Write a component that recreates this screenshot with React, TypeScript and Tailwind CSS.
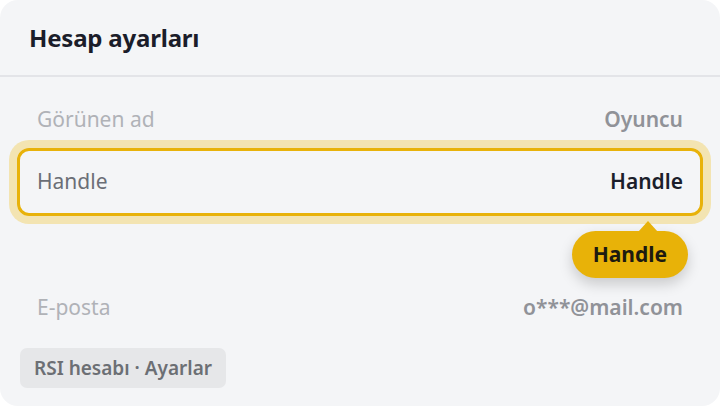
const rows = [
  { label: "Görünen ad", value: "Oyuncu", active: false },
  { label: "Handle", value: "Handle", active: true },
]

export default function App() {
  return (
    <div className="w-[720px] h-[406px] bg-white font-['Noto_Sans','Open_Sans',sans-serif]">
      <div className="h-full rounded-[18px] bg-[#f4f5f7] overflow-hidden flex flex-col">
        <div className="h-[77px] shrink-0 flex items-center px-[29px] border-b-2 border-[#e3e4e8]">
          <h1 className="text-[24px] font-bold text-[#1b1d2a] tracking-[-0.2px]">Hesap ayarları</h1>
        </div>

        <div className="pt-[15px] px-[17px]">
          {rows.map((row) => (
            <div
              key={row.label}
              className={
                row.active
                  ? "relative h-[68px] flex items-center justify-between px-[17px] rounded-[12px] border-[3px] border-[#e8b20a] shadow-[0_0_0_8px_#f3e4b2]"
                  : "h-[56px] flex items-center justify-between px-[20px]"
              }
            >
              <span className={row.active ? "text-[21px] text-[#6b6e76]" : "text-[21px] text-[#b0b2b7]"}>
                {row.label}
              </span>
              <span className={row.active ? "text-[21px] font-semibold text-[#1b1e2b]" : "text-[21px] font-semibold text-[#909298]"}>
                {row.value}
              </span>
              {row.active && (
                <div className="absolute top-full right-[12px] mt-[18px] z-10">
                  <div className="absolute -top-[10px] right-[30px] w-0 h-0 border-l-[10px] border-r-[10px] border-b-[11px] border-l-transparent border-r-transparent border-b-[#e8b208]" />
                  <div className="h-[47px] px-[21px] flex items-center rounded-full bg-[#e8b208] shadow-[0_6px_14px_rgba(0,0,0,0.18)]">
                    <span className="text-[21px] font-bold text-[#1d1a10]">Handle</span>
                  </div>
                </div>
              )}
            </div>
          ))}
          <div className="h-[64px]" />
          <div className="h-[56px] flex items-center justify-between px-[20px]">
            <span className="text-[21px] text-[#b0b2b7]">E-posta</span>
            <span className="text-[21px] font-semibold text-[#909298]">o***@mail.com</span>
          </div>
        </div>

        <div className="px-[20px] pt-[12px]">
          <button className="h-[40px] px-[14px] rounded-[7px] bg-[#e6e7e9] text-[19px] font-semibold text-[#6c6f74]">
            RSI hesabı · Ayarlar
          </button>
        </div>
      </div>
    </div>
  )
}
